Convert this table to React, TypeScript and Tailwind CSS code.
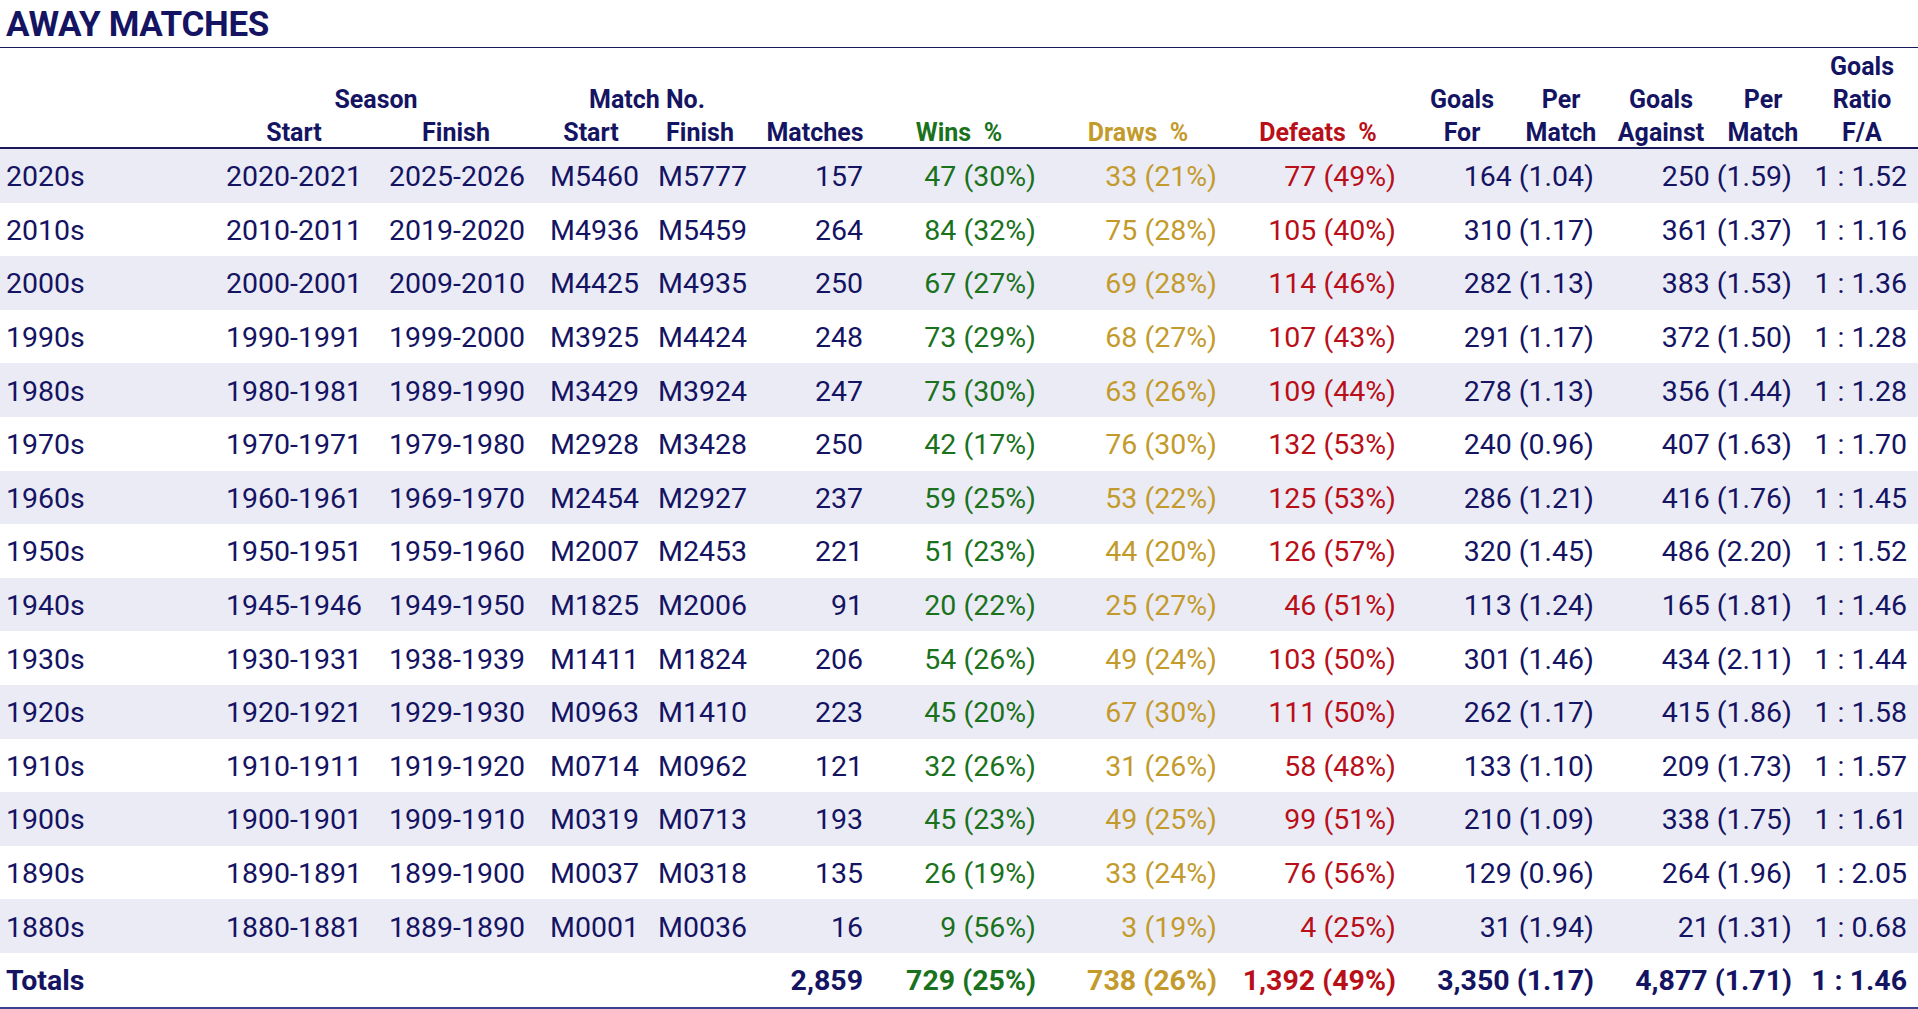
import React from "react";

type Row = [string, string, string, string, string, string, string, string, string, string, string, string];

const rows: Row[] = [
  ["2020s", "2020-2021", "2025-2026", "M5460", "M5777", "157", "47 (30%)", "33 (21%)", "77 (49%)", "164 (1.04)", "250 (1.59)", "1 : 1.52"],
  ["2010s", "2010-2011", "2019-2020", "M4936", "M5459", "264", "84 (32%)", "75 (28%)", "105 (40%)", "310 (1.17)", "361 (1.37)", "1 : 1.16"],
  ["2000s", "2000-2001", "2009-2010", "M4425", "M4935", "250", "67 (27%)", "69 (28%)", "114 (46%)", "282 (1.13)", "383 (1.53)", "1 : 1.36"],
  ["1990s", "1990-1991", "1999-2000", "M3925", "M4424", "248", "73 (29%)", "68 (27%)", "107 (43%)", "291 (1.17)", "372 (1.50)", "1 : 1.28"],
  ["1980s", "1980-1981", "1989-1990", "M3429", "M3924", "247", "75 (30%)", "63 (26%)", "109 (44%)", "278 (1.13)", "356 (1.44)", "1 : 1.28"],
  ["1970s", "1970-1971", "1979-1980", "M2928", "M3428", "250", "42 (17%)", "76 (30%)", "132 (53%)", "240 (0.96)", "407 (1.63)", "1 : 1.70"],
  ["1960s", "1960-1961", "1969-1970", "M2454", "M2927", "237", "59 (25%)", "53 (22%)", "125 (53%)", "286 (1.21)", "416 (1.76)", "1 : 1.45"],
  ["1950s", "1950-1951", "1959-1960", "M2007", "M2453", "221", "51 (23%)", "44 (20%)", "126 (57%)", "320 (1.45)", "486 (2.20)", "1 : 1.52"],
  ["1940s", "1945-1946", "1949-1950", "M1825", "M2006", "91", "20 (22%)", "25 (27%)", "46 (51%)", "113 (1.24)", "165 (1.81)", "1 : 1.46"],
  ["1930s", "1930-1931", "1938-1939", "M1411", "M1824", "206", "54 (26%)", "49 (24%)", "103 (50%)", "301 (1.46)", "434 (2.11)", "1 : 1.44"],
  ["1920s", "1920-1921", "1929-1930", "M0963", "M1410", "223", "45 (20%)", "67 (30%)", "111 (50%)", "262 (1.17)", "415 (1.86)", "1 : 1.58"],
  ["1910s", "1910-1911", "1919-1920", "M0714", "M0962", "121", "32 (26%)", "31 (26%)", "58 (48%)", "133 (1.10)", "209 (1.73)", "1 : 1.57"],
  ["1900s", "1900-1901", "1909-1910", "M0319", "M0713", "193", "45 (23%)", "49 (25%)", "99 (51%)", "210 (1.09)", "338 (1.75)", "1 : 1.61"],
  ["1890s", "1890-1891", "1899-1900", "M0037", "M0318", "135", "26 (19%)", "33 (24%)", "76 (56%)", "129 (0.96)", "264 (1.96)", "1 : 2.05"],
  ["1880s", "1880-1881", "1889-1890", "M0001", "M0036", "16", "9 (56%)", "3 (19%)", "4 (25%)", "31 (1.94)", "21 (1.31)", "1 : 0.68"],
];

const totals: Row = ["Totals", "", "", "", "", "2,859", "729 (25%)", "738 (26%)", "1,392 (49%)", "3,350 (1.17)", "4,877 (1.71)", "1 : 1.46"];

const GRID =
  "grid grid-cols-[214px_160px_164px_106px_112px_118px_170px_188px_172px_116px_82px_118px_86px_112px]";

function DataRow({ r, shaded, bold }: { r: Row; shaded: boolean; bold?: boolean }) {
  return (
    <div
      className={`${GRID} h-[53.6px] items-center pt-[3px] whitespace-pre ${shaded ? "bg-[#ebebf6]" : "bg-white"} ${
        bold ? "font-bold" : "font-normal"
      }`}
    >
      <div className="pl-[6px] text-left">{r[0]}</div>
      <div className="pr-[12px] text-right">{r[1]}</div>
      <div className="pr-[13px] text-right">{r[2]}</div>
      <div className="pr-[5px] text-right">{r[3]}</div>
      <div className="pr-[9px] text-right">{r[4]}</div>
      <div className="pr-[11px] text-right">{r[5]}</div>
      <div className="pr-[8px] text-right text-[#1b721d]">{r[6]}</div>
      <div className="pr-[15px] text-right text-[#c39b2c]">{r[7]}</div>
      <div className="pr-[8px] text-right text-[#b90f19]">{r[8]}</div>
      <div className="col-span-2 pr-[8px] text-right">{r[9]}</div>
      <div className="col-span-2 pr-[14px] text-right">{r[10]}</div>
      <div className="pr-[11px] text-right">{r[11]}</div>
    </div>
  );
}

export default function App() {
  return (
    <div className="w-[1918px] bg-white font-['Roboto',sans-serif] text-[#141463]">
      <div className="border-b border-[#1a1a5a] pl-[6px] pt-[3px] text-[35px] font-bold leading-[44px] tracking-[-0.3px]">
        AWAY MATCHES
      </div>
      <div
        className={`${GRID} grid-rows-[33px_33px_31px] border-b-2 border-[#1a1a5a] pt-[2px] text-center text-[25px] font-bold leading-[33px] whitespace-pre`}
      >
        <div className="col-start-14 row-start-1">Goals</div>

        <div className="col-span-2 col-start-2 row-start-2">Season</div>
        <div className="col-span-2 col-start-4 row-start-2">Match No.</div>
        <div className="col-start-10 row-start-2">Goals</div>
        <div className="col-start-11 row-start-2">Per</div>
        <div className="col-start-12 row-start-2">Goals</div>
        <div className="col-start-13 row-start-2">Per</div>
        <div className="col-start-14 row-start-2">Ratio</div>

        <div className="col-start-2 row-start-3">Start</div>
        <div className="col-start-3 row-start-3">Finish</div>
        <div className="col-start-4 row-start-3">Start</div>
        <div className="col-start-5 row-start-3">Finish</div>
        <div className="col-start-6 row-start-3">Matches</div>
        <div className="col-start-7 row-start-3 text-[#1b721d]">Wins  %</div>
        <div className="col-start-8 row-start-3 text-[#c39b2c]">Draws  %</div>
        <div className="col-start-9 row-start-3 text-[#b90f19]">Defeats  %</div>
        <div className="col-start-10 row-start-3">For</div>
        <div className="col-start-11 row-start-3">Match</div>
        <div className="col-start-12 row-start-3">Against</div>
        <div className="col-start-13 row-start-3">Match</div>
        <div className="col-start-14 row-start-3">F/A</div>
      </div>
      <div className="text-[28.5px] leading-[34px]">
        {rows.map((r, i) => (
          <DataRow key={r[0]} r={r} shaded={i % 2 === 0} />
        ))}
        <div className="border-b-2 border-[#3c4193]">
          <DataRow r={totals} shaded={false} bold />
        </div>
      </div>
    </div>
  );
}
